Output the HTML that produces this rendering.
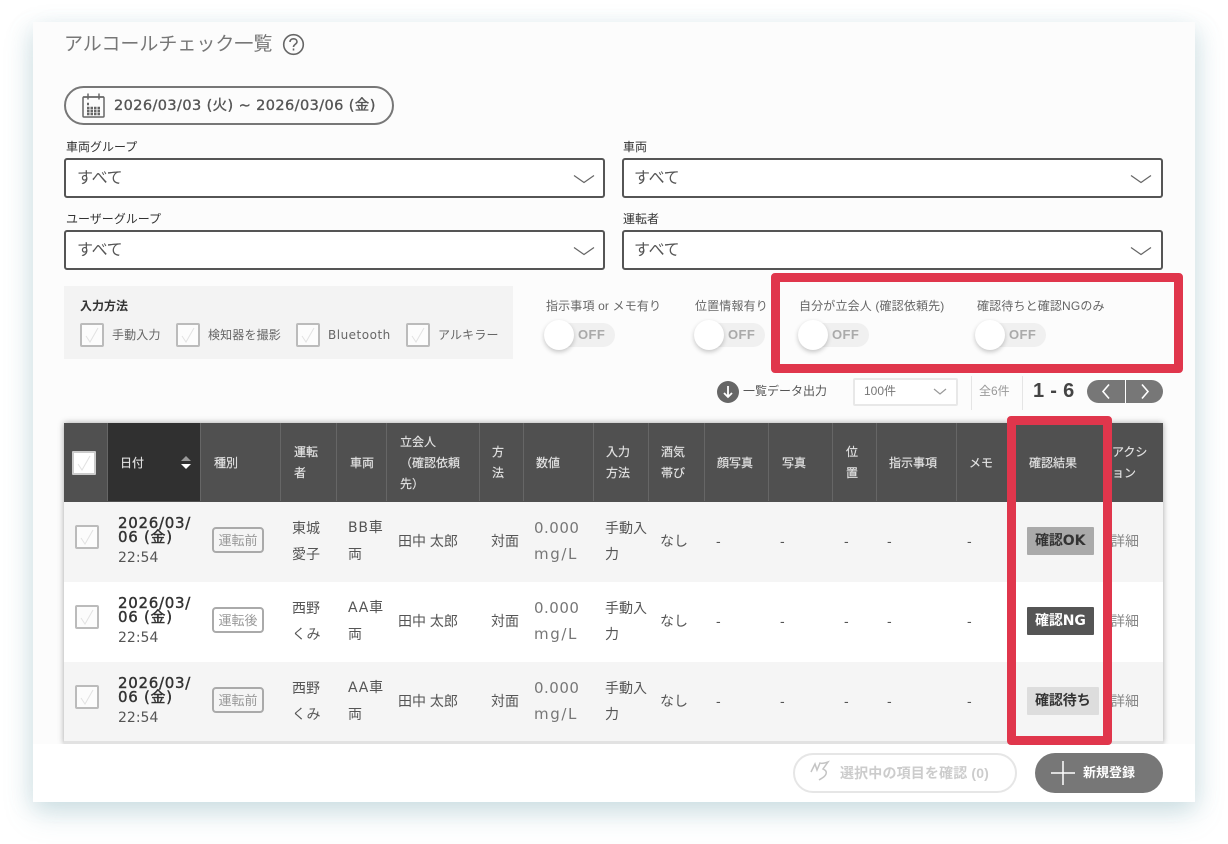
<!DOCTYPE html>
<html lang="ja"><head><meta charset="utf-8"><title>アルコールチェック一覧</title>
<style>
*{box-sizing:border-box;margin:0;padding:0}
html,body{width:1228px;height:844px;overflow:hidden;background:#fff}
body{position:relative;font-family:"Liberation Sans","Noto Sans CJK JP",sans-serif;color:#555;filter:blur(.35px)}
div,span.a,svg{position:absolute}
.t{position:absolute;white-space:nowrap;line-height:20px;height:20px}
.la{font-family:"DejaVu Sans","Noto Sans CJK JP",sans-serif}
#card{left:33px;top:22px;width:1162px;height:780px;background:#fcfcfc;box-shadow:0 12px 26px rgba(120,170,180,.28),-8px 4px 20px rgba(120,170,180,.09),8px 4px 20px rgba(120,170,180,.09)}
.lab{font-size:12px;color:#333}
.sel{background:#fff;border:2px solid #555;border-radius:3px;height:40px;width:541px}
.st{font-size:16px;color:#555;letter-spacing:-.3px}
.cb{width:24px;height:24px;border:2px solid #bbb;border-radius:2px;background:#fcfcfc}
.tg{width:71px;height:24px;background:#f0f0f0;border-radius:12px}
.kn{width:30px;height:30px;border-radius:50%;background:#fff;box-shadow:0 2px 5px rgba(0,0,0,.22)}
.off{font-size:13px;font-weight:bold;color:#aaa;letter-spacing:.4px}
.tl{font-size:12px;color:#666;letter-spacing:.15px}
.h{font-size:12px;color:#e4e4e4;margin-top:1px;-webkit-text-stroke:.15px #e4e4e4}
.vb{width:1px;top:423px;height:78px;background:#666}
.row{left:64px;width:1099px;height:80px}
.d{font-family:"DejaVu Sans","Noto Sans CJK JP",sans-serif;font-size:15px;color:#333;letter-spacing:.7px;line-height:14px;height:14px;-webkit-text-stroke:.4px #333}
.c{font-size:14px;color:#555;margin-top:1px}
.tag{left:212px;width:52px;height:26px;border:2px solid #aaa;border-radius:4px;font-size:13px;color:#999;text-align:center;line-height:24px;background:#fff}
.bd{left:1027px;height:28px;font-size:14px;font-weight:bold;line-height:28px;padding-left:8px;border-radius:1px;color:#333;font-family:"DejaVu Sans","Noto Sans CJK JP",sans-serif;letter-spacing:-.1px}
.red{border:9px solid #e0364c;border-radius:4px;background:transparent}
.n{font-family:"DejaVu Sans","Noto Sans CJK JP",sans-serif;font-size:15px;letter-spacing:.5px;color:#777}
.m{letter-spacing:1.6px}
.v{font-family:"DejaVu Sans","Noto Sans CJK JP",sans-serif;letter-spacing:.8px}
.tm{font-family:"DejaVu Sans","Noto Sans CJK JP",sans-serif}
</style></head><body>
<div id="card"></div>

<span class="t" style="left:64px;top:35px;font-size:19px;color:#777">アルコールチェック一覧</span>
<svg style="left:282px;top:33px" width="23" height="23" viewBox="0 0 23 23" fill="none" stroke="#666" stroke-width="1.6"><circle cx="11.5" cy="11.5" r="9.8"/><path d="M8 9c0-2 1.500-3.200 3.500-3.200S15 7 15 8.800c0 2.400-3.500 2.600-3.500 5.200"/><path d="M11.500 15.500v2"/></svg>

<div style="left:64px;top:86px;width:330px;height:39px;border:2px solid #777;border-radius:20px"></div>
<svg style="left:81px;top:92px" width="25" height="26" viewBox="0 0 25 26" fill="none" stroke="#666" stroke-width="1.500"><rect x="2" y="5" width="21" height="20" rx="1"/><path d="M7 1.500v6M18 1.500v6M2 5h21"/><path d="M6 12h2M6 16h13M6 19h13M6 22h13" stroke-width="2.500" stroke-dasharray="2.500 1"/></svg>
<span class="t la" style="left:114px;top:96px;font-size:14.500px;color:#555;letter-spacing:.4px;-webkit-text-stroke:.35px #555">2026/03/03 (火) ~ 2026/03/06 (金)</span>

<span class="t lab" style="left:66px;top:137px">車両グループ</span>
<span class="t lab" style="left:623px;top:137px">車両</span>
<span class="t lab" style="left:66px;top:209px">ユーザーグループ</span>
<span class="t lab" style="left:623px;top:209px">運転者</span>
<div class="sel" style="left:64px;top:158px"></div><div class="sel" style="left:622px;top:158px"></div>
<div class="sel" style="left:64px;top:230px"></div><div class="sel" style="left:622px;top:230px"></div>
<span class="t st" style="left:77px;top:169px">すべて</span><span class="t st" style="left:634px;top:169px">すべて</span>
<span class="t st" style="left:77px;top:241px">すべて</span><span class="t st" style="left:634px;top:241px">すべて</span>
<svg style="left:573px;top:174px" width="22" height="10" fill="none" stroke="#666" stroke-width="1.200"><path d="M1 1.500l10 7 10-7"/></svg>
<svg style="left:1130px;top:174px" width="22" height="10" fill="none" stroke="#666" stroke-width="1.200"><path d="M1 1.500l10 7 10-7"/></svg>
<svg style="left:573px;top:246px" width="22" height="10" fill="none" stroke="#666" stroke-width="1.200"><path d="M1 1.500l10 7 10-7"/></svg>
<svg style="left:1130px;top:246px" width="22" height="10" fill="none" stroke="#666" stroke-width="1.200"><path d="M1 1.500l10 7 10-7"/></svg>

<div style="left:64px;top:286px;width:449px;height:73px;background:#f3f3f3"></div>
<span class="t" style="left:80px;top:296px;font-size:12px;font-weight:bold;color:#333">入力方法</span>
<div class="cb" style="left:80px;top:323px"></div><div class="cb" style="left:176px;top:323px"></div><div class="cb" style="left:296px;top:323px"></div><div class="cb" style="left:406px;top:323px"></div>
<svg style="left:80px;top:323px" width="24" height="24" fill="none" stroke="#e2e2e2"><path d="M6 13l4 6 8-14"/></svg>
<svg style="left:176px;top:323px" width="24" height="24" fill="none" stroke="#e2e2e2"><path d="M6 13l4 6 8-14"/></svg>
<svg style="left:296px;top:323px" width="24" height="24" fill="none" stroke="#e2e2e2"><path d="M6 13l4 6 8-14"/></svg>
<svg style="left:406px;top:323px" width="24" height="24" fill="none" stroke="#e2e2e2"><path d="M6 13l4 6 8-14"/></svg>
<span class="t tl" style="left:112px;top:325px">手動入力</span>
<span class="t tl" style="left:208px;top:325px">検知器を撮影</span>
<span class="t tl la" style="left:328px;top:325px;font-size:12px;letter-spacing:.5px">Bluetooth</span>
<span class="t tl" style="left:438px;top:325px">アルキラー</span>

<span class="t tl" style="left:546px;top:296px">指示事項 or メモ有り</span>
<span class="t tl" style="left:695px;top:296px">位置情報有り</span>
<span class="t tl" style="left:799px;top:296px">自分が立会人 (確認依頼先)</span>
<span class="t tl" style="left:977px;top:296px">確認待ちと確認NGのみ</span>
<div class="tg" style="left:544px;top:323px"></div><div class="kn" style="left:544px;top:320px"></div><span class="t off" style="left:578px;top:325px">OFF</span>
<div class="tg" style="left:694px;top:323px"></div><div class="kn" style="left:694px;top:320px"></div><span class="t off" style="left:728px;top:325px">OFF</span>
<div class="tg" style="left:798px;top:323px"></div><div class="kn" style="left:798px;top:320px"></div><span class="t off" style="left:832px;top:325px">OFF</span>
<div class="tg" style="left:975px;top:323px"></div><div class="kn" style="left:975px;top:320px"></div><span class="t off" style="left:1009px;top:325px">OFF</span>

<svg style="left:717px;top:381px" width="22" height="22"><circle cx="11" cy="11" r="11" fill="#666"/><path d="M11 5v11M7 12l4 4 4-4" fill="none" stroke="#fff" stroke-width="1.800"/></svg>
<span class="t" style="left:743px;top:381px;font-size:12px;color:#555">一覧データ出力</span>
<div style="left:853px;top:378px;width:105px;height:28px;background:#fff;border:2px solid #e8e8e8;border-radius:2px"></div>
<span class="t" style="left:864px;top:381px;font-size:12px;color:#777">100件</span>
<svg style="left:933px;top:388px" width="14" height="8" fill="none" stroke="#999" stroke-width="1.200"><path d="M1 1l6 5 6-5"/></svg>
<div style="left:971px;top:376px;width:1px;height:34px;background:#e5e5e5"></div>
<span class="t" style="left:979px;top:381px;font-size:12px;color:#999">全6件</span>
<div style="left:1022px;top:376px;width:1px;height:34px;background:#e5e5e5"></div>
<span class="t" style="left:1033px;top:381px;font-size:20px;font-weight:bold;color:#444;letter-spacing:.3px">1 - 6</span>
<div style="left:1087px;top:380px;width:76px;height:23px;background:#777;border-radius:12px"></div>
<div style="left:1125px;top:380px;width:1px;height:23px;background:#fff"></div>
<svg style="left:1100px;top:383px" width="12" height="17" fill="none" stroke="#fff" stroke-width="1.600"><path d="M9 1.500L3 8.500l6 7"/></svg>
<svg style="left:1139px;top:383px" width="12" height="17" fill="none" stroke="#fff" stroke-width="1.600"><path d="M3 1.500l6 7-6 7"/></svg>

<!-- table -->
<div style="left:64px;top:423px;width:1099px;height:321px;background:#fff;box-shadow:0 0 6px rgba(0,0,0,.35)"></div>
<div style="left:64px;top:423px;width:1099px;height:79px;background:#505050"></div>
<div style="left:108px;top:423px;width:92px;height:78px;background:#303030"></div>
<div class="vb" style="left:107px"></div><div class="vb" style="left:200px"></div><div class="vb" style="left:280px"></div><div class="vb" style="left:336px"></div><div class="vb" style="left:386px"></div><div class="vb" style="left:479px"></div><div class="vb" style="left:523px"></div><div class="vb" style="left:593px"></div><div class="vb" style="left:648px"></div><div class="vb" style="left:704px"></div><div class="vb" style="left:768px"></div><div class="vb" style="left:832px"></div><div class="vb" style="left:876px"></div><div class="vb" style="left:956px"></div><div class="vb" style="left:1105px"></div>

<div style="left:72px;top:451px;width:24px;height:24px;background:#fff;border:2px solid #ccc;border-radius:1px"></div>
<svg style="left:72px;top:451px" width="24" height="24" fill="none" stroke="#e2e2e2"><path d="M6 13l4 6 8-14"/></svg>
<span class="t h" style="left:120px;top:452px">日付</span>
<svg style="left:180px;top:456px" width="12" height="13"><path d="M6 0l5 5H1z" fill="#999"/><path d="M6 13l5-5H1z" fill="#fff"/></svg>
<span class="t h" style="left:214px;top:452px">種別</span>
<span class="t h" style="left:294px;top:441px">運転</span><span class="t h" style="left:294px;top:462px">者</span>
<span class="t h" style="left:350px;top:452px">車両</span>
<span class="t h" style="left:400px;top:431px">立会人</span><span class="t h" style="left:400px;top:452px">（確認依頼</span><span class="t h" style="left:400px;top:473px">先）</span>
<span class="t h" style="left:492px;top:441px">方</span><span class="t h" style="left:492px;top:462px">法</span>
<span class="t h" style="left:536px;top:452px">数値</span>
<span class="t h" style="left:606px;top:441px">入力</span><span class="t h" style="left:606px;top:462px">方法</span>
<span class="t h" style="left:661px;top:441px">酒気</span><span class="t h" style="left:661px;top:462px">帯び</span>
<span class="t h" style="left:717px;top:452px">顔写真</span>
<span class="t h" style="left:782px;top:452px">写真</span>
<span class="t h" style="left:846px;top:441px">位</span><span class="t h" style="left:846px;top:462px">置</span>
<span class="t h" style="left:889px;top:452px">指示事項</span>
<span class="t h" style="left:969px;top:452px">メモ</span>
<span class="t h" style="left:1029px;top:452px">確認結果</span>
<span class="t h" style="left:1112px;top:441px">アクシ</span><span class="t h" style="left:1112px;top:462px">ョン</span>

<div class="row" style="top:502px;background:#f5f5f5"></div>
<div class="row" style="top:582px;background:#fff"></div>
<div class="row" style="top:662px;background:#f5f5f5"></div>
<div style="left:64px;top:741px;width:1099px;height:3px;background:#e2e2e2"></div>

<div class="cb" style="left:75px;top:525px"></div><svg style="left:75px;top:525px" width="24" height="24" fill="none" stroke="#e2e2e2"><path d="M6 13l4 6 8-14"/></svg>
<div class="cb" style="left:75px;top:605px"></div><svg style="left:75px;top:605px" width="24" height="24" fill="none" stroke="#e2e2e2"><path d="M6 13l4 6 8-14"/></svg>
<div class="cb" style="left:75px;top:685px"></div><svg style="left:75px;top:685px" width="24" height="24" fill="none" stroke="#e2e2e2"><path d="M6 13l4 6 8-14"/></svg>

<span class="t d" style="left:118px;top:516px">2026/03/</span><span class="t d" style="left:118px;top:530px">06 (金)</span><span class="t c tm" style="left:118px;top:547px">22:54</span>
<span class="t d" style="left:118px;top:596px">2026/03/</span><span class="t d" style="left:118px;top:610px">06 (金)</span><span class="t c tm" style="left:118px;top:627px">22:54</span>
<span class="t d" style="left:118px;top:676px">2026/03/</span><span class="t d" style="left:118px;top:690px">06 (金)</span><span class="t c tm" style="left:118px;top:707px">22:54</span>

<div class="tag" style="top:527px;background:#f5f5f5">運転前</div>
<div class="tag" style="top:607px">運転後</div>
<div class="tag" style="top:687px;background:#f5f5f5">運転前</div>

<span class="t c" style="left:292px;top:517px">東城</span><span class="t c" style="left:292px;top:543px">愛子</span>
<span class="t c" style="left:292px;top:597px">西野</span><span class="t c" style="left:292px;top:623px">くみ</span>
<span class="t c" style="left:292px;top:677px">西野</span><span class="t c" style="left:292px;top:703px">くみ</span>
<span class="t c v" style="left:348px;top:517px">BB車</span><span class="t c" style="left:348px;top:543px">両</span>
<span class="t c v" style="left:348px;top:597px">AA車</span><span class="t c" style="left:348px;top:623px">両</span>
<span class="t c v" style="left:348px;top:677px">AA車</span><span class="t c" style="left:348px;top:703px">両</span>
<span class="t c" style="left:398px;top:530px">田中 太郎</span><span class="t c" style="left:398px;top:610px">田中 太郎</span><span class="t c" style="left:398px;top:690px">田中 太郎</span>
<span class="t c" style="left:491px;top:530px">対面</span><span class="t c" style="left:491px;top:610px">対面</span><span class="t c" style="left:491px;top:690px">対面</span>
<span class="t c n" style="left:534px;top:517px">0.000</span><span class="t c n m" style="left:534px;top:543px">mg/L</span>
<span class="t c n" style="left:534px;top:597px">0.000</span><span class="t c n m" style="left:534px;top:623px">mg/L</span>
<span class="t c n" style="left:534px;top:677px">0.000</span><span class="t c n m" style="left:534px;top:703px">mg/L</span>
<span class="t c" style="left:605px;top:517px">手動入</span><span class="t c" style="left:605px;top:543px">力</span>
<span class="t c" style="left:605px;top:597px">手動入</span><span class="t c" style="left:605px;top:623px">力</span>
<span class="t c" style="left:605px;top:677px">手動入</span><span class="t c" style="left:605px;top:703px">力</span>
<span class="t c" style="left:660px;top:530px">なし</span><span class="t c" style="left:660px;top:610px">なし</span><span class="t c" style="left:660px;top:690px">なし</span>

<span class="t c" style="left:716px;top:530px">-</span><span class="t c" style="left:780px;top:530px">-</span><span class="t c" style="left:844px;top:530px">-</span><span class="t c" style="left:887px;top:530px">-</span><span class="t c" style="left:967px;top:530px">-</span>
<span class="t c" style="left:716px;top:610px">-</span><span class="t c" style="left:780px;top:610px">-</span><span class="t c" style="left:844px;top:610px">-</span><span class="t c" style="left:887px;top:610px">-</span><span class="t c" style="left:967px;top:610px">-</span>
<span class="t c" style="left:716px;top:690px">-</span><span class="t c" style="left:780px;top:690px">-</span><span class="t c" style="left:844px;top:690px">-</span><span class="t c" style="left:887px;top:690px">-</span><span class="t c" style="left:967px;top:690px">-</span>

<div class="bd" style="top:527px;width:67px;background:#aaa">確認OK</div>
<div class="bd" style="top:607px;width:67px;background:#555;color:#fff">確認NG</div>
<div class="bd" style="top:687px;width:72px;background:#ddd">確認待ち</div>
<span class="t c" style="left:1111px;top:530px;color:#888">詳細</span><span class="t c" style="left:1111px;top:610px;color:#888">詳細</span><span class="t c" style="left:1111px;top:690px;color:#888">詳細</span>

<!-- bottom bar -->
<div style="left:33px;top:744px;width:1162px;height:58px;background:#fff"></div>
<div style="left:793px;top:753px;width:224px;height:40px;border:2px solid #e6e6e6;border-radius:20px;background:#fff"></div>
<svg style="left:808px;top:760px" width="24" height="26" fill="none" stroke="#c4c4c4" stroke-width="1.500"><path d="M3 12L7 4l2 6 3-7c2 1 5 0 8-1l-5 7c2 1 4 2 3 5-1 3-4 4-7 6"/></svg>
<span class="t" style="left:840px;top:763px;font-size:14px;font-weight:bold;color:#ccc;letter-spacing:.15px">選択中の項目を確認 (0)</span>
<div style="left:1035px;top:753px;width:128px;height:40px;background:#777;border-radius:20px"></div>
<svg style="left:1051px;top:761px" width="24" height="24" stroke="#fff" stroke-width="1.500"><path d="M0 12h24M12 0v24"/></svg>
<span class="t" style="left:1083px;top:763px;font-size:13px;font-weight:bold;color:#fff">新規登録</span>

<div class="red" style="left:771px;top:273px;width:412px;height:100px"></div>
<div class="red" style="left:1007px;top:416px;width:105px;height:329px"></div>
</body></html>
